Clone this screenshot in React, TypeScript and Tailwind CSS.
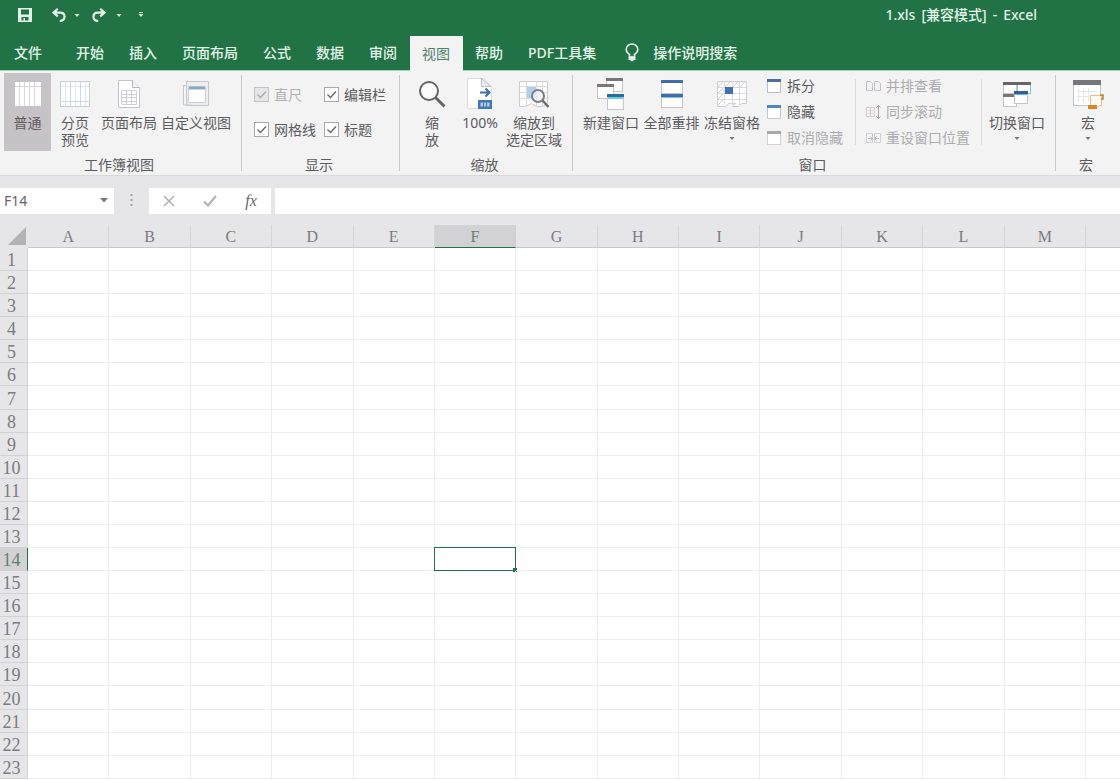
import type { ReactNode } from "react";

const COLUMNS = ["A", "B", "C", "D", "E", "F", "G", "H", "I", "J", "K", "L", "M"];
const ROWS = Array.from({ length: 23 }, (_, i) => i + 1);
const ACTIVE_COLUMN = "F";
const ACTIVE_ROW = 14;
const TABS = ["开始", "插入", "页面布局", "公式", "数据", "审阅", "视图", "帮助", "PDF工具集"];

/* ---------- icons ---------- */

function SaveIcon() {
  return (
    <svg width="14" height="14" viewBox="0 0 14 14" aria-hidden="true">
      <path fillRule="evenodd" fill="#e4f3e9" d="M0 0h14v14H0zM3 1.5v5h8v-5zM3.500 9v3.500h2V10h1.500v2.500h3.500V9z" />
    </svg>
  );
}

function UndoIcon({ flip = false }: { flip?: boolean }) {
  return (
    <svg width="14" height="14" viewBox="0 0 14 14" fill="none" stroke="#e4f3e9" strokeWidth="2.200" aria-hidden="true">
      <g transform={flip ? "translate(14 0) scale(-1 1)" : undefined}>
        <path d="M5.8 .8 1.6 4.6l4.2 3.8M2 4.6h6.2c2.600 0 4.300 1.500 4.300 3.900 0 2.600-1.800 4.300-4.700 4.500" />
      </g>
    </svg>
  );
}

function Caret({ color = "#d5ebdc", bar = false }: { color?: string; bar?: boolean }) {
  return (
    <svg width="6" height="6" viewBox="0 0 6 6" aria-hidden="true">
      {bar && <path d="M1 .5h4" stroke={color} />}
      <path d="M.5 2h5L3 5z" fill={color} />
    </svg>
  );
}

function BulbIcon() {
  return (
    <svg width="14" height="20" viewBox="0 0 14 20" fill="none" stroke="#e4f3e9" strokeWidth="1.600" aria-hidden="true">
      <path d="M4.500 14v-2.500C2.500 10.200 1.200 8.600 1.200 6.600a5.800 5.600 0 0 1 11.600 0c0 2-1.300 3.600-3.300 4.900V14z" />
      <path d="M4.300 14.500h5.400v1.800H4.300zM5.500 17.500h3" fill="#e4f3e9" />
    </svg>
  );
}

function NormalViewIcon() {
  return (
    <svg width="28" height="28" viewBox="0 0 28 28" aria-hidden="true">
      <rect x="1" y="2" width="26" height="24" fill="#fff" />
      <path d="M5.500 2v24M10.500 2v24M15.500 2v24M20.500 2v24M1 6.500h26" stroke="#d9d9dd" />
    </svg>
  );
}

function PageBreakIcon() {
  return (
    <svg width="30" height="28" viewBox="0 0 30 28" aria-hidden="true">
      <rect x=".5" y="1.500" width="29" height="25" fill="#fff" stroke="#c9d0d9" />
      <path d="M5.500 2v24M15.500 2v24M25.500 2v24M1 6.500h28" stroke="#e3e6ea" />
      <path d="M10.500 2v24M20.500 2v24M1 21.500h28" stroke="#c8d8ea" />
    </svg>
  );
}

function PageLayoutIcon() {
  return (
    <svg width="24" height="30" viewBox="0 0 24 30" aria-hidden="true">
      <path d="M1.500 1.500h14l7 7v20h-21z" fill="#fff" stroke="#c4c4c8" />
      <path d="M15.500 1.500v7h7" fill="#f3f3f3" stroke="#b5b5b9" />
      <path d="M4.500 11.500h15v14h-15zM4.500 15.500h15M4.500 18.500h15M4.500 22.500h15M9.500 11.500v14M14.500 11.500v14" fill="none" stroke="#cfcfd3" />
    </svg>
  );
}

function CustomViewIcon() {
  return (
    <svg width="28" height="28" viewBox="0 0 28 28" aria-hidden="true">
      <path d="M4.500 1.500h22v24h-22z" fill="#eceef1" stroke="#c3c8ce" />
      <path d="M1.500 5.500h3M1.500 5v20h8" fill="none" stroke="#c3c8ce" />
      <path d="M6.500 6.500h17v16h-17z" fill="#fff" stroke="#ccd0d6" />
      <path d="M7 8h16" stroke="#8fa9c4" strokeWidth="3" />
    </svg>
  );
}

function ZoomIcon() {
  return (
    <svg width="28" height="28" viewBox="0 0 28 28" fill="none" aria-hidden="true">
      <circle cx="11" cy="11" r="9" fill="#fcfcfc" stroke="#666" strokeWidth="2" />
      <path d="m17.500 17.500 9 9" stroke="#666" strokeWidth="3" />
    </svg>
  );
}

function HundredIcon() {
  return (
    <svg width="28" height="34" viewBox="0 0 28 34" aria-hidden="true">
      <path d="M1.500 1.500h16l8 8v22h-24z" fill="#fff" stroke="#dcdce0" />
      <path d="M15.500 1.500v8h9z" fill="#ececec" stroke="#c2c2c6" />
      <path d="M14 15.500h9M19.500 11.500l4 4-4 4" fill="none" stroke="#3a70aa" strokeWidth="2" />
      <path d="M12 23h14v9H12z" fill="#3f78b5" />
      <path d="M14.500 25.500h9v4h-9z" fill="#b4cce6" />
      <path d="M17.500 25v5M20.500 25v5" stroke="#3f78b5" />
    </svg>
  );
}

function ZoomSelectionIcon() {
  return (
    <svg width="32" height="30" viewBox="0 0 32 30" fill="none" aria-hidden="true">
      <path d="M1.500 2.500h28v22l-5 3h-6l-5-3-6 3h-6z" fill="#fff" stroke="#cbcbd0" />
      <path d="M2 7.500h27M2 19.500h27M2 13.500h27M8.500 2v25M18.500 2v25M24.500 2v25" stroke="#d9d9de" />
      <path d="M9 8h9v11H9z" fill="#b3cdea" />
      <circle cx="20" cy="17" r="6" fill="#eef3f9" fillOpacity=".8" stroke="#7b7f86" strokeWidth="2" />
      <path d="m24.500 21.500 6 6.500" stroke="#6b6b6b" strokeWidth="2.500" />
    </svg>
  );
}

function MiniWindow({ x, y, w, h, bar, edge = "#c6c6ca" }: { x: number; y: number; w: number; h: number; bar: string; edge?: string }) {
  return (
    <g>
      <rect x={x + 0.5} y={y + 0.5} width={w - 1} height={h - 1} fill="#fff" stroke={edge} />
      <rect x={x} y={y} width={w} height="3" fill={bar} />
    </g>
  );
}

function NewWindowIcon() {
  return (
    <svg width="30" height="32" viewBox="0 0 30 32" aria-hidden="true">
      <MiniWindow x={10} y={0} w={17} h={14} bar="#777" />
      <MiniWindow x={1} y={6} w={17} h={15} bar="#777" />
      <MiniWindow x={11} y={16} w={17} h={16} bar="#2b6c97" />
      <path d="M12 20h15" stroke="#5fd0ee" strokeWidth="2" />
    </svg>
  );
}

function ArrangeIcon() {
  return (
    <svg width="22" height="28" viewBox="0 0 22 28" aria-hidden="true">
      <MiniWindow x={0} y={0} w={22} h={14} bar="#3d6ea5" />
      <MiniWindow x={0} y={14} w={22} h={14} bar="#3d6ea5" />
      <path d="M1 17.500h20" stroke="#7db9e0" />
    </svg>
  );
}

function FreezeIcon() {
  return (
    <svg width="30" height="28" viewBox="0 0 30 28" fill="none" aria-hidden="true">
      <path d="M.5 1.500h29v22h-5l-3 3h-6l3-3h-7l-3 3h-8z" fill="#fff" stroke="#cfcfd3" />
      <path d="M1 7.500h28M1 13.500h28M1 19.500h28M7.500 1v24M15.500 1v24M22.500 1v24" stroke="#dadade" />
      <path d="m1 7 5-5M8 7l5-5M16 7l5-5M23 7l5-5M1 13l5-5M1 19l5-5M1 25l5-5" stroke="#cdcdd1" />
      <path d="M8 7h8v7H8z" fill="#3f72b4" />
    </svg>
  );
}

function SwitchIcon() {
  return (
    <svg width="30" height="28" viewBox="0 0 30 28" aria-hidden="true">
      <MiniWindow x={1} y={2} w={14} h={12} bar="#666" />
      <MiniWindow x={15} y={2} w={14} h={12} bar="#666" edge="#8fc1e4" />
      <MiniWindow x={1} y={14} w={14} h={13} bar="#777" />
      <MiniWindow x={12} y={11} w={14} h={13} bar="#2f5f94" />
      <path d="M13 14.500h12" stroke="#62b1e0" />
    </svg>
  );
}

function MacroIcon() {
  return (
    <svg width="32" height="32" viewBox="0 0 32 32" aria-hidden="true">
      <path d="M1.500 3.500h27v24h-27z" fill="#fff" stroke="#c4c4c8" />
      <path d="M1 2h28v5H1z" fill="#777" />
      <path d="M6.500 10v14M11.500 10v14M16.500 10v14M5 13.500h20M5 18.500h20" stroke="#e6e6ec" />
      <path d="M18.500 17.500h11v10h-2l-2 2h-7z" fill="#fffaf2" stroke="#f2bb83" />
      <path d="M28 17h3v4h-2" fill="none" stroke="#c97a25" strokeWidth="1.500" />
      <path d="M16 27h9v4h-9z" fill="#d8862c" />
    </svg>
  );
}

function SmallWindowIcon({ bar, edge }: { bar: string; edge: string }) {
  return (
    <svg width="14" height="14" viewBox="0 0 14 14" aria-hidden="true">
      <MiniWindow x={0} y={0} w={14} h={14} bar={bar} edge={edge} />
    </svg>
  );
}

function SideBySideIcon() {
  return (
    <svg width="15" height="14" viewBox="0 0 15 14" fill="none" stroke="#c3c3c8" aria-hidden="true">
      <path d="M.5 2.500h4l2 2v7h-6zM8.500 2.500h4l2 2v7h-6z" />
    </svg>
  );
}

function SyncScrollIcon() {
  return (
    <svg width="15" height="16" viewBox="0 0 15 16" fill="none" aria-hidden="true">
      <path d="M.5 3.500h4v9h-4zM4.500 3.500h4v9h-4zM2 6.500h5M2 9.500h5" stroke="#d9cdd1" />
      <path d="M12.500 1v14M10.500 3.500l2-2 2 2M10.500 12.500l2 2 2-2" stroke="#a3a3a8" />
    </svg>
  );
}

function ResetPositionIcon() {
  return (
    <svg width="15" height="14" viewBox="0 0 15 14" fill="none" stroke="#bdbdc2" aria-hidden="true">
      <path d="M.5 2.500h6v9h-6zM8.500 2.500h6v9h-6z" stroke="#cfcfd3" />
      <path d="M2 7.500h4M9 7.500h4M4.500 5.500l2 2-2 2M10.500 5.500l-2 2 2 2" />
    </svg>
  );
}

/* ---------- ribbon parts ---------- */

function Group({ label, width, inset = "", children, last = false }: { label: string; width: string; inset?: string; children: ReactNode; last?: boolean }) {
  return (
    <section className={`relative flex shrink-0 flex-col py-0.5 ${width}`} aria-label={label}>
      <div className={`flex flex-1 ${inset}`}>{children}</div>
      <div className="pr-1 text-center leading-4">{label}</div>
      {!last && <div className="absolute top-1 right-0 bottom-1 w-px bg-[#c9c9cb]" />}
    </section>
  );
}

function BigButton({ icon, lines, width, active = false, caret = false }: { icon: ReactNode; lines: string[]; width: string; active?: boolean; caret?: boolean }) {
  return (
    <button type="button" className={`flex h-[78px] shrink-0 flex-col items-center pt-1 ${width} ${active ? "bg-[#c5c3c5]" : ""}`}>
      <span className="flex h-[34px] items-center">{icon}</span>
      <span className="mt-[3px] flex flex-col items-center leading-[17px] whitespace-nowrap">
        {lines.map((line) => (
          <span key={line}>{line}</span>
        ))}
      </span>
      {caret && (
        <span className="mt-1">
          <Caret color="#777" />
        </span>
      )}
    </button>
  );
}

function SmallButton({ icon, label, disabled = false }: { icon: ReactNode; label: string; disabled?: boolean }) {
  return (
    <button type="button" disabled={disabled} className="flex h-[26px] items-center gap-[5px] whitespace-nowrap disabled:text-[#acacb0]">
      <span className="flex w-[15px]">{icon}</span>
      {label}
    </button>
  );
}

function Tick({ label, disabled = false }: { label: string; disabled?: boolean }) {
  return (
    <label className={`flex h-[35px] items-center gap-[5px] whitespace-nowrap ${disabled ? "text-[#b0b0b3]" : ""}`}>
      <span className="grid">
        <input
          type="checkbox"
          defaultChecked
          disabled={disabled}
          className="peer col-start-1 row-start-1 size-[15px] appearance-none border border-[#a9a9ac] bg-white disabled:border-[#c3c3c6] disabled:bg-[#e6e6e8]"
        />
        <svg className="pointer-events-none invisible col-start-1 row-start-1 size-[15px] peer-checked:visible" viewBox="0 0 15 15" fill="none" aria-hidden="true">
          <path d="m3.500 7.500 3 3 5.500-6" stroke={disabled ? "#aaa" : "#666"} strokeWidth="1.300" />
        </svg>
      </span>
      {label}
    </label>
  );
}

function Ribbon() {
  return (
    <div className="flex h-[105px] shrink-0 overflow-hidden border-t border-[#a5d0b5] bg-[#f3f3f3]">
      <Group label="工作簿视图" width="w-[242px]" inset="pl-1">
        <BigButton icon={<NormalViewIcon />} lines={["普通"]} width="w-[47px]" active />
        <BigButton icon={<PageBreakIcon />} lines={["分页", "预览"]} width="w-12" />
        <BigButton icon={<PageLayoutIcon />} lines={["页面布局"]} width="w-15" />
        <BigButton icon={<CustomViewIcon />} lines={["自定义视图"]} width="w-[74px]" />
      </Group>
      <Group label="显示" width="w-[158px]">
        <div className="grid grid-cols-[70px_70px] content-start pt-1 pl-3">
          <Tick label="直尺" disabled />
          <Tick label="编辑栏" />
          <Tick label="网格线" />
          <Tick label="标题" />
        </div>
      </Group>
      <Group label="缩放" width="w-[173px]" inset="pl-2">
        <BigButton icon={<ZoomIcon />} lines={["缩", "放"]} width="w-12" />
        <BigButton icon={<HundredIcon />} lines={["100%"]} width="w-12" />
        <BigButton icon={<ZoomSelectionIcon />} lines={["缩放到", "选定区域"]} width="w-15" />
      </Group>
      <Group label="窗口" width="w-[483px]" inset="pl-2">
        <BigButton icon={<NewWindowIcon />} lines={["新建窗口"]} width="w-15" />
        <BigButton icon={<ArrangeIcon />} lines={["全部重排"]} width="w-[61px]" />
        <BigButton icon={<FreezeIcon />} lines={["冻结窗格"]} width="w-15" caret />
        <div className="ml-[5px] w-[88px]">
          <SmallButton icon={<SmallWindowIcon bar="#4a6f98" edge="#b9bec6" />} label="拆分" />
          <SmallButton icon={<SmallWindowIcon bar="#4f86c6" edge="#c3c8d0" />} label="隐藏" />
          <SmallButton icon={<SmallWindowIcon bar="#a9a9ad" edge="#dccfd3" />} label="取消隐藏" disabled />
        </div>
        <div className="mt-1.5 h-[66px] w-px bg-[#dcdcde]" />
        <div className="ml-2.5 w-[115px]">
          <SmallButton icon={<SideBySideIcon />} label="并排查看" disabled />
          <SmallButton icon={<SyncScrollIcon />} label="同步滚动" disabled />
          <SmallButton icon={<ResetPositionIcon />} label="重设窗口位置" disabled />
        </div>
        <div className="mt-1.5 h-[66px] w-px bg-[#dcdcde]" />
        <BigButton icon={<SwitchIcon />} lines={["切换窗口"]} width="ml-1 w-[62px]" caret />
      </Group>
      <Group label="宏" width="w-16" last>
        <BigButton icon={<MacroIcon />} lines={["宏"]} width="w-full" caret />
      </Group>
    </div>
  );
}

/* ---------- formula bar ---------- */

function FormulaBar() {
  return (
    <div className="flex h-[50px] shrink-0 items-center border-t border-[#dadadc] bg-[#e6e6e8]">
      <div className="flex h-[26px] w-[114px] items-center bg-white pr-1.5">
        <input aria-label="名称框" defaultValue="F14" className="w-0 flex-1 bg-transparent pl-1 text-[#666] outline-none" />
        <button type="button" aria-label="展开名称框" className="flex">
          <svg width="8" height="5" viewBox="0 0 8 5" aria-hidden="true">
            <path d="M0 0h8L4 4.500z" fill="#777" />
          </svg>
        </button>
      </div>
      <svg className="mx-4" width="3" height="13" viewBox="0 0 3 13" fill="#a5a5a8" aria-hidden="true">
        <path d="M.5 0h2v2h-2zM.5 5h2v2h-2zM.5 10h2v2h-2z" />
      </svg>
      <div className="flex h-[26px] w-[122px] items-center justify-between bg-white px-3">
        <button type="button" aria-label="取消" className="flex w-4 justify-center">
          <svg width="12" height="12" viewBox="0 0 12 12" stroke="#b0b0b3" strokeWidth="1.500" aria-hidden="true">
            <path d="m1 1 10 10M11 1 1 11" />
          </svg>
        </button>
        <button type="button" aria-label="输入" className="flex w-4 justify-center">
          <svg width="14" height="12" viewBox="0 0 14 12" fill="none" stroke="#b0b0b3" strokeWidth="2" aria-hidden="true">
            <path d="m1 6.500 4 4L13 1" />
          </svg>
        </button>
        <button type="button" className="w-4 font-['Liberation_Serif',serif] text-base leading-5 text-[#666] italic">
          fx
        </button>
      </div>
      <input aria-label="编辑栏" className="ml-1 h-[26px] min-w-0 flex-1 bg-white px-2 outline-none" />
    </div>
  );
}

/* ---------- sheet ---------- */

function Sheet() {
  return (
    <div className="min-h-0 flex-1 bg-white pb-px">
      <table className="h-full w-full table-fixed border-separate border-spacing-0 font-['Liberation_Serif','Noto_Sans_CJK_SC',serif] text-[#7b7b7e]">
        <colgroup>
          <col className="w-7" />
          {COLUMNS.map((c) => (
            <col key={c} />
          ))}
          <col className="w-[34px]" />
        </colgroup>
        <thead>
          <tr className="text-base leading-5">
            <th className="bg-[#e6e6e8] p-0" aria-label="全选">
              <svg className="ml-2 block" width="18" height="19" viewBox="0 0 18 19" aria-hidden="true">
                <path d="M18 0v18H0z" fill="#b2b2b5" />
              </svg>
            </th>
            {COLUMNS.map((c) => (
              <th
                key={c}
                scope="col"
                className={`border-r border-b p-0 pt-0.5 font-normal ${
                  c === ACTIVE_COLUMN ? "border-r-[#cfcfd1] border-b-[#217346] bg-[#d2d2d4] text-[#5f8270]" : "border-r-[#d6d6d8] border-b-[#c9c9cb] bg-[#e6e6e8]"
                }`}
              >
                {c}
              </th>
            ))}
            <td className="border-b border-[#c9c9cb] bg-[#e6e6e8] p-0" />
          </tr>
        </thead>
        <tbody>
          {ROWS.map((r) => (
            <tr key={r}>
              <th
                scope="row"
                className={`border-r border-b border-b-[#d2d2d4] p-0 pt-0.5 pr-1 text-lg leading-5 font-normal ${
                  r === ACTIVE_ROW ? "border-r-[#217346] bg-[#d2d2d4] text-[#5f8270]" : "border-r-[#d6d6d8] bg-[#e6e6e8]"
                }`}
              >
                {r}
              </th>
              {COLUMNS.map((c) => (
                <td key={c} className="relative border-r border-b border-[#ededef] p-0">
                  {r === ACTIVE_ROW && c === ACTIVE_COLUMN && (
                    <div className="absolute -inset-px border border-[#217346]">
                      <div className="absolute -right-0.5 -bottom-0.5 size-1 bg-[#217346]" />
                    </div>
                  )}
                </td>
              ))}
              <td className="border-b border-[#ededef] p-0" />
            </tr>
          ))}
        </tbody>
      </table>
    </div>
  );
}

/* ---------- page ---------- */

export default function App() {
  return (
    <div className="flex h-screen flex-col overflow-hidden font-['Noto_Sans','Noto_Sans_CJK_SC',sans-serif] text-sm text-[#5c5c5f]">
      <header className="shrink-0 bg-[#217346] text-[#e4f3e9]">
        <div className="flex h-9 items-center justify-between pr-[83px] pb-1.5 pl-[18px]">
          <div className="flex items-center">
            <button type="button" aria-label="保存" className="flex">
              <SaveIcon />
            </button>
            <button type="button" aria-label="撤消" className="ml-5 flex items-center gap-2">
              <UndoIcon />
              <Caret />
            </button>
            <button type="button" aria-label="恢复" className="ml-3 flex items-center gap-2.5">
              <UndoIcon flip />
              <Caret />
            </button>
            <button type="button" aria-label="自定义快速访问工具栏" className="ml-4 flex">
              <Caret bar />
            </button>
          </div>
          <h1 className="flex gap-1.5 font-medium">
            <span>1.xls</span>
            <span>[兼容模式]</span>
            <span>-</span>
            <span>Excel</span>
          </h1>
        </div>
        <nav className="flex h-[34px] items-stretch font-medium whitespace-nowrap">
          <button type="button" className="mr-2 w-14">
            文件
          </button>
          {TABS.map((tab) => (
            <button key={tab} type="button" className={`pr-[13px] pl-3 ${tab === "视图" ? "z-10 -mb-px bg-[#f3f3f3] font-normal text-[#4f8268]" : ""}`}>
              {tab}
            </button>
          ))}
          <button type="button" className="ml-4 flex items-center gap-3.5">
            <BulbIcon />
            操作说明搜索
          </button>
        </nav>
      </header>
      <Ribbon />
      <FormulaBar />
      <Sheet />
    </div>
  );
}
